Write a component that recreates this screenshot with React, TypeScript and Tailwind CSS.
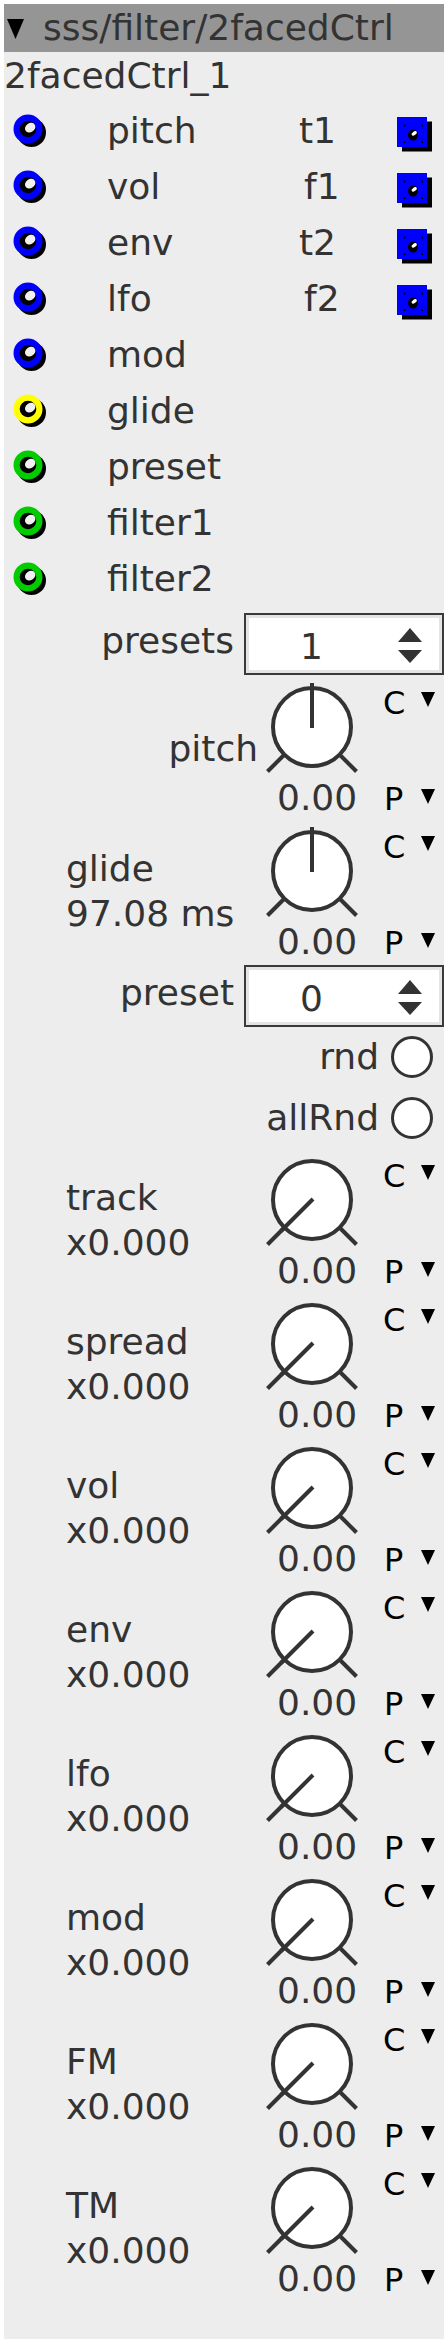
import React from "react";

const F = "font-['DejaVu_Sans',sans-serif]";

function Port({ color }: { color: string }) {
  return (
    <svg width="40" height="36" viewBox="0 0 40 36" className="shrink-0">
      <circle cx="19.5" cy="19.5" r="14.5" fill="#000" />
      <circle cx="16" cy="16" r="8.6" fill="#000" />
      <ellipse cx="18.2" cy="14.6" rx="5.6" ry="4.4" transform="rotate(-35 18.2 14.6)" fill="#f0f0f0" />
      <circle cx="16" cy="16" r="11.4" fill="none" stroke={color} strokeWidth="6.2" />
    </svg>
  );
}

function Square() {
  return (
    <svg width="36" height="36" viewBox="0 0 36 36" className="shrink-0">
      <rect x="5" y="4.5" width="30" height="30" fill="#000" />
      <rect x="0" y="0" width="30" height="30" fill="#0000ff" />
      <rect x="6.5" y="7.5" width="2" height="2" fill="#000" />
      <rect x="24" y="7.5" width="2" height="2" fill="#000" />
      <rect x="6.5" y="24" width="2" height="2" fill="#000" />
      <rect x="24" y="24" width="2" height="2" fill="#000" />
      <ellipse cx="16" cy="18" rx="5" ry="5.5" fill="#000" />
      <ellipse cx="17.2" cy="16.4" rx="3" ry="1.8" transform="rotate(-35 17.2 16.4)" fill="#fff" />
    </svg>
  );
}

function Tri({ cls }: { cls: string }) {
  return (
    <svg width="14" height="15" viewBox="0 0 14 15" className={cls}>
      <polygon points="0,0 14,0 7,15" fill="#000" />
    </svg>
  );
}

function Knob({ mid }: { mid: boolean }) {
  return (
    <svg width="100" height="100" viewBox="0 0 100 100" className="shrink-0">
      <circle cx="50" cy="52" r="39" fill="#fff" stroke="#333" strokeWidth="4" />
      <line x1="22" y1="80" x2="5.5" y2="96.5" stroke="#333" strokeWidth="4" />
      <line x1="78" y1="80" x2="94.5" y2="96.5" stroke="#333" strokeWidth="4" />
      {mid ? (
        <line x1="50" y1="53" x2="50" y2="8" stroke="#333" strokeWidth="4" />
      ) : (
        <line x1="51" y1="51" x2="19" y2="83" stroke="#333" strokeWidth="4" />
      )}
    </svg>
  );
}

function KnobBlock({ lines, right, mid }: { lines: string[]; right?: boolean; mid?: boolean }) {
  return (
    <div className="flex h-[144px]">
      <div
        className={
          right
            ? "flex w-[258px] items-center justify-end pr-[4px] pt-[2px] leading-[45px]"
            : "flex w-[258px] items-center pl-[62px] leading-[45px]"
        }
      >
        <div>
          {lines.map((l) => (
            <div key={l} className="whitespace-pre">
              {l}
            </div>
          ))}
        </div>
      </div>
      <div className="flex w-[100px] flex-col">
        <Knob mid={!!mid} />
        <div className="mt-auto pl-[15px] leading-[42px]">0.00</div>
      </div>
      <div className="ml-[21px] flex flex-col text-[32px] leading-[37px] text-black">
        <div className="mt-[10px] flex items-start">
          <span className="w-[38px]">C</span>
          <Tri cls="mt-[7px]" />
        </div>
        <div className="mt-auto mb-[1px] flex items-start">
          <span className="w-[38px] pl-[1px]">P</span>
          <Tri cls="mt-[8px]" />
        </div>
      </div>
    </div>
  );
}

function Spin({ value }: { value: string }) {
  return (
    <div className="h-[62px] w-[200px] border-2 border-[#3a3a3a]">
      <div className="flex h-full w-full border-[3px] border-[#e4e4e4] bg-white">
        <div className="w-[125px] pt-[8px] text-center leading-[42px]">{value}</div>
        <svg width="24" height="52" viewBox="0 0 24 52" className="ml-[24px] shrink-0">
          <polygon points="12,10 24,24 0,24" fill="#333" />
          <polygon points="0,32 24,32 12,45" fill="#333" />
        </svg>
      </div>
    </div>
  );
}

function Radio({ label, h }: { label: string; h: string }) {
  return (
    <div className={`flex items-center justify-end pr-[11px] ${h}`}>
      <span className="mr-[12px] leading-[42px]">{label}</span>
      <div className="h-[42px] w-[42px] rounded-full border-[3px] border-[#333] bg-white" />
    </div>
  );
}

const ports: { name: string; color: string; tf?: string }[] = [
  { name: "pitch", color: "#0000ff", tf: "t1" },
  { name: "vol", color: "#0000ff", tf: "f1" },
  { name: "env", color: "#0000ff", tf: "t2" },
  { name: "lfo", color: "#0000ff", tf: "f2" },
  { name: "mod", color: "#0000ff" },
  { name: "glide", color: "#ffff00" },
  { name: "preset", color: "#00cc00" },
  { name: "filter1", color: "#00cc00" },
  { name: "filter2", color: "#00cc00" },
];

export default function App() {
  return (
    <div className={`min-h-[2352px] w-[448px] bg-white pt-[4px] text-[36px] text-[#333] ${F}`}>
      <div className="ml-[4px] w-[440px] bg-[#ededed] pb-[39px]">
        <div className="flex h-[48px] items-center bg-[#959595]">
          <svg width="17" height="20" viewBox="0 0 17 20" className="ml-[3px] mt-[2px] shrink-0">
            <polygon points="0,0 17,0 8.5,20" fill="#000" />
          </svg>
          <span className="ml-[19px] leading-[42px]">sss/filter/2facedCtrl</span>
        </div>
        <div className="h-[51px] pt-[3px] leading-[42px]">2facedCtrl_1</div>
        {ports.map((p) => (
          <div key={p.name} className="flex h-[56px] items-center">
            <div className="w-[103px] pl-[8px]">
              <Port color={p.color} />
            </div>
            <div className="w-[192px] leading-[42px]">{p.name}</div>
            {p.tf && (
              <>
                <div className={`w-[98px] leading-[42px] ${p.tf.startsWith("f") ? "pl-[5px]" : ""}`}>{p.tf}</div>
                <div className="mt-[14px] self-start">
                  <Square />
                </div>
              </>
            )}
          </div>
        ))}
        <div className="mt-[6px] flex h-[62px] items-start justify-end">
          <span className="mr-[10px] pt-[7px] leading-[42px]">presets</span>
          <Spin value="1" />
        </div>
        <KnobBlock lines={["pitch"]} right mid />
        <KnobBlock lines={["glide", "97.08 ms"]} mid />
        <div className="mt-[2px] flex h-[62px] items-start justify-end">
          <span className="mr-[10px] pt-[7px] leading-[42px]">preset</span>
          <Spin value="0" />
        </div>
        <Radio label="rnd" h="h-[60px]" />
        <Radio label="allRnd" h="h-[61px]" />
        <KnobBlock lines={["track", "x0.000"]} />
        <KnobBlock lines={["spread", "x0.000"]} />
        <KnobBlock lines={["vol", "x0.000"]} />
        <KnobBlock lines={["env", "x0.000"]} />
        <KnobBlock lines={["lfo", "x0.000"]} />
        <KnobBlock lines={["mod", "x0.000"]} />
        <KnobBlock lines={["FM", "x0.000"]} />
        <KnobBlock lines={["TM", "x0.000"]} />
      </div>
    </div>
  );
}
